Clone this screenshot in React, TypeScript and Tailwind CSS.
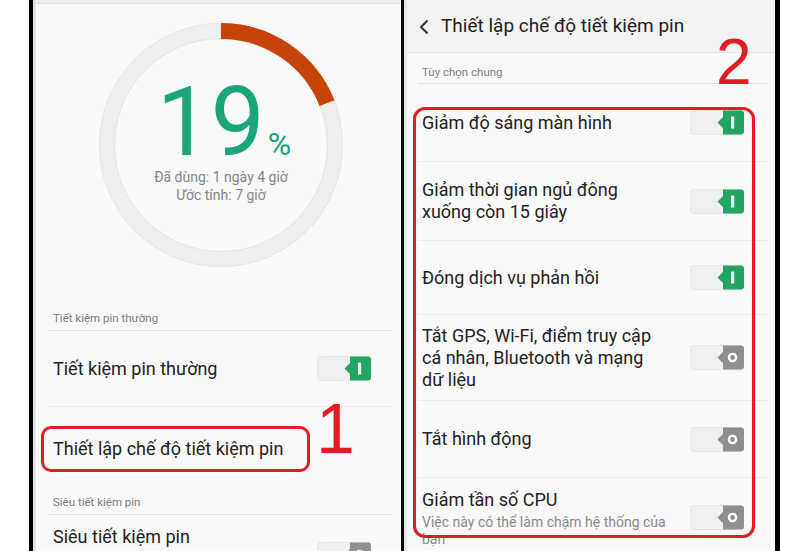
import type { ReactNode } from 'react'

function Toggle({ on }: { on: boolean }) {
  const fill = on ? '#22a563' : '#8f8f8f'
  return (
    <svg width="54" height="25" viewBox="0 0 54 25" className="shrink-0">
      <rect x="0.5" y="0.5" width="53" height="24" rx="3" fill="#efefef" stroke="#e6e6e6" />
      <path
        d="M33 0.5 H51 A3 3 0 0 1 54 3.5 V21.5 A3 3 0 0 1 51 24.5 H33 V18 L27.5 12.5 L33 7 Z"
        fill={fill}
      />
      {on ? (
        <rect x="41" y="6.5" width="3.2" height="12" rx="0.6" fill="#fff" />
      ) : (
        <circle cx="42.5" cy="12.5" r="3.6" fill="none" stroke="#fff" strokeWidth="2.4" />
      )}
    </svg>
  )
}

function BatteryRing() {
  return (
    <div className="relative ml-[63px] mt-[19px] h-[244px] w-[244px]">
      <svg width="244" height="244" viewBox="0 0 244 244">
        <circle cx="122" cy="122" r="114" fill="none" stroke="#eeeeee" strokeWidth="16" />
        <circle cx="122" cy="122" r="121.5" fill="none" stroke="#e5e5e5" strokeWidth="1" />
        <circle cx="122" cy="122" r="106.5" fill="none" stroke="#e4e4e4" strokeWidth="1" />
        <circle
          cx="122"
          cy="122"
          r="114"
          fill="none"
          stroke="#c8430a"
          strokeWidth="16"
          strokeDasharray="136.1 1000"
          transform="rotate(-90 122 122)"
        />
      </svg>
      <div className="absolute inset-0 flex flex-col items-center pt-[53px]">
        <div className="flex items-baseline pl-[6px] text-[#1aa57b]">
          <span className="text-[96px] font-normal leading-[92px]">19</span>
          <span className="ml-[3px] text-[32px] leading-none">%</span>
        </div>
        <div className="text-[14px] leading-[18px] text-[#858585]">Đã dùng: 1 ngày 4 giờ</div>
        <div className="text-[14px] leading-[18px] text-[#858585]">Ước tính: 7 giờ</div>
      </div>
    </div>
  )
}

function SectionLabel({ children, className }: { children: ReactNode; className: string }) {
  return (
    <div className={`flex items-end border-b border-[#e3e3e3] pl-[4px] ${className}`}>
      <span className="text-[11.5px] leading-[14px] text-[#7c7c7c]">{children}</span>
    </div>
  )
}

const OPTIONS: { lines: string[]; on: boolean; h: string }[] = [
  { lines: ['Giảm độ sáng màn hình'], on: true, h: 'h-[78px]' },
  { lines: ['Giảm thời gian ngủ đông', 'xuống còn 15 giây'], on: true, h: 'h-[79px]' },
  { lines: ['Đóng dịch vụ phản hồi'], on: true, h: 'h-[74px]' },
  { lines: ['Tắt GPS, Wi-Fi, điểm truy cập', 'cá nhân, Bluetooth và mạng', 'dữ liệu'], on: false, h: 'h-[86px]' },
  { lines: ['Tắt hình động'], on: false, h: 'h-[77px]' },
]

export default function App() {
  return (
    <div className="flex h-[551px] w-[800px] overflow-hidden bg-white font-['Roboto',sans-serif] text-[#222]">
      <div className="w-[29px] shrink-0" />

      {/* left phone */}
      <div className="w-[375px] shrink-0 border-l-[4px] border-r-[3px] border-black">
        <div className="relative h-full border-l-[3px] border-[#e2e2e2] bg-[#f9f9f9]">
          <div className="h-[4px] border-b border-[#e0e0e0] bg-[#efefef]" />
          <BatteryRing />

          <div className="ml-[13px] mr-[9px]">
            <SectionLabel className="h-[64px] pb-[5px]">Tiết kiệm pin thường</SectionLabel>

            <div className="flex h-[76px] items-center justify-between border-b border-[#eaeaea] pl-[4px] pr-[21px]">
              <span className="text-[18px] leading-[22px]">Tiết kiệm pin thường</span>
              <Toggle on />
            </div>

            <div className="h-[80px] pt-[19px]">
              <div className="-ml-[8px] flex h-[46px] w-[269px] items-center rounded-[10px] border-[3px] border-[#e31b23] pl-[9px]">
                <span className="text-[18px] leading-[22px]">Thiết lập chế độ tiết kiệm pin</span>
              </div>
            </div>

            <SectionLabel className="h-[28px] pb-[5px]">Siêu tiết kiệm pin</SectionLabel>

            <div className="flex justify-between pl-[4px] pr-[21px] pt-[11px]">
              <span className="text-[18px] leading-[22px]">Siêu tiết kiệm pin</span>
              <div className="mt-[16px]">
                <Toggle on={false} />
              </div>
            </div>
          </div>

          <span className="absolute left-[280px] top-[394px] font-['Liberation_Sans',sans-serif] text-[70px] leading-none text-[#e31b23]">
            1
          </span>
        </div>
      </div>

      {/* right phone */}
      <div className="w-[376px] shrink-0 border-r-[5px] border-black">
        <div className="relative h-full border-l-[3px] border-[#e6e6e6] bg-[#f9f9f9]">
          <div className="flex h-[53px] items-center border-b border-[#e2e2e2] bg-[#f3f3f3] pl-[11px]">
            <svg width="12" height="16" viewBox="0 0 12 16" className="mt-[1px]">
              <path d="M9.5 1.5 L3 8 L9.5 14.5" fill="none" stroke="#333" strokeWidth="2" />
            </svg>
            <span className="ml-[11px] text-[19px] leading-[24px]">Thiết lập chế độ tiết kiệm pin</span>
          </div>

          <div className="ml-[11px] mr-[8px]">
            <SectionLabel className="h-[31px] pb-[4px]">Tùy chọn chung</SectionLabel>

            {OPTIONS.map((o, i) => (
              <div
                key={i}
                className={`flex items-center justify-between border-b border-[#eaeaea] pl-[4px] pr-[23px] ${o.h}`}
              >
                <div className="flex flex-col text-[18px] leading-[22px]">
                  {o.lines.map((l) => (
                    <span key={l}>{l}</span>
                  ))}
                </div>
                <Toggle on={o.on} />
              </div>
            ))}

            <div className="flex justify-between pl-[4px] pr-[23px] pt-[11px]">
              <div className="flex flex-col">
                <span className="text-[18px] leading-[22px]">Giảm tần số CPU</span>
                <span className="mt-[3px] text-[14px] leading-[17px] text-[#8a8a8a]">
                  Việc này có thể làm chậm hệ thống của
                </span>
                <span className="text-[14px] leading-[17px] text-[#8a8a8a]">bạn</span>
              </div>
              <div className="mt-[16px]">
                <Toggle on={false} />
              </div>
            </div>
          </div>

          <div className="pointer-events-none absolute left-[6px] top-[107px] h-[431px] w-[342px] rounded-[12px] border-[3px] border-[#e31b23]" />
          <span className="absolute left-[309px] top-[30px] font-['Liberation_Sans',sans-serif] text-[64px] leading-none text-[#e31b23]">
            2
          </span>
        </div>
      </div>

      <div className="flex-1" />
    </div>
  )
}
